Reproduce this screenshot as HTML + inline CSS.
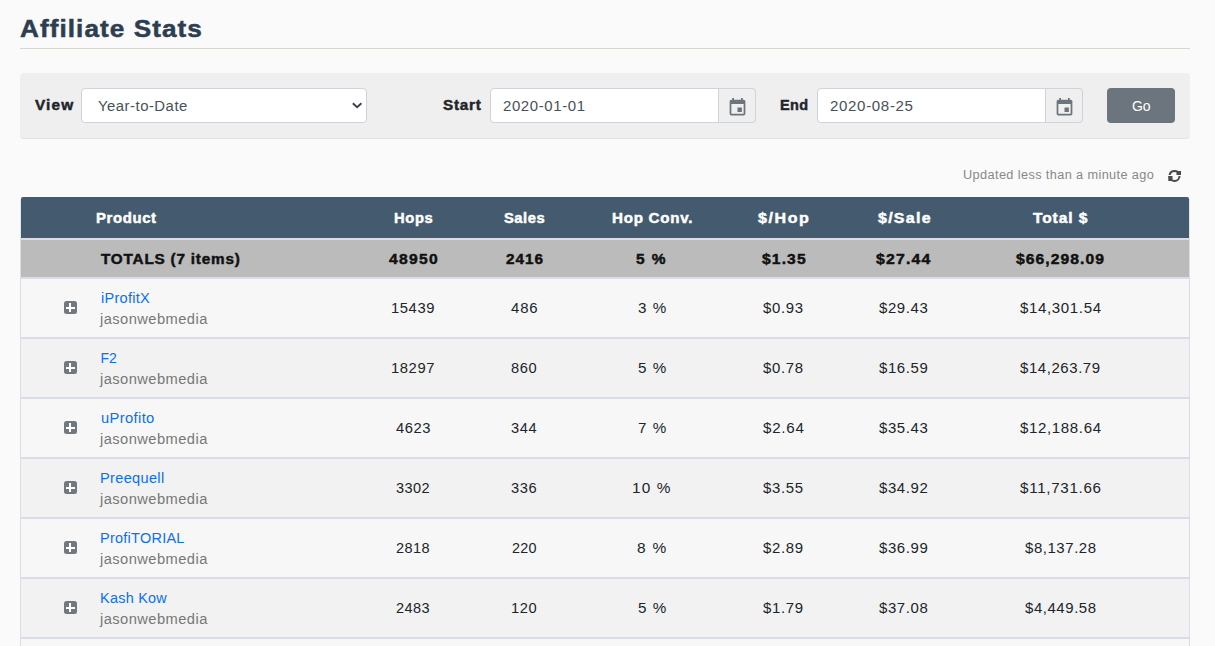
<!DOCTYPE html>
<html><head><meta charset="utf-8">
<style>
html,body{margin:0;padding:0;}
body{width:1215px;height:646px;overflow:hidden;background:#fafafa;position:relative;font-family:"Liberation Sans",sans-serif;}
.t{position:absolute;white-space:nowrap;line-height:1;transform-origin:0 0;}
.b{position:absolute;box-sizing:border-box;}
</style></head><body>
<div class="b" style="left:20px;top:48px;width:1170px;height:1px;background:#d9d6d0"></div>
<div class="b" style="left:20px;top:73px;width:1170px;height:66px;background:#efefef;border-radius:4px;border-bottom:1px solid #e1e3e6"></div>
<div class="b" style="left:81px;top:88px;width:286px;height:35px;background:#fff;border:1px solid #ced4da;border-radius:4px"></div>
<svg class="b" style="left:351px;top:100px" width="12" height="9" viewBox="0 0 12 9"><path d="M1.8 3.2 L6.1 7.1 L10.4 3.2" fill="none" stroke="#3a4047" stroke-width="1.9"/></svg>
<div class="b" style="left:490px;top:88px;width:266px;height:35px;background:#fff;border:1px solid #ced4da;border-radius:4px"></div>
<div class="b" style="left:718px;top:88px;width:38px;height:35px;background:#efefef;border:1px solid #ced4da;border-radius:0 4px 4px 0"></div>
<div class="b" style="left:817px;top:88px;width:266px;height:35px;background:#fff;border:1px solid #ced4da;border-radius:4px"></div>
<div class="b" style="left:1045px;top:88px;width:38px;height:35px;background:#efefef;border:1px solid #ced4da;border-radius:0 4px 4px 0"></div>
<svg class="b" style="left:727px;top:97px" width="21" height="21" viewBox="0 0 24 24"><path fill="#6c757d" d="M17 12h-5v5h5v-5zM16 1v2H8V1H6v2H5c-1.11 0-1.99.9-1.99 2L3 19c0 1.1.89 2 2 2h14c1.1 0 2-.9 2-2V5c0-1.1-.9-2-2-2h-1V1h-2zm3 18H5V8h14v11z"/></svg>
<svg class="b" style="left:1054px;top:97px" width="21" height="21" viewBox="0 0 24 24"><path fill="#6c757d" d="M17 12h-5v5h5v-5zM16 1v2H8V1H6v2H5c-1.11 0-1.99.9-1.99 2L3 19c0 1.1.89 2 2 2h14c1.1 0 2-.9 2-2V5c0-1.1-.9-2-2-2h-1V1h-2zm3 18H5V8h14v11z"/></svg>
<div class="b" style="left:1107px;top:88px;width:68px;height:35px;background:#6c757d;border-radius:4px"></div>
<svg class="b" style="left:1160px;top:164px" width="30" height="24" viewBox="0 0 30 24"><g fill="#4a4a4a"><path d="M8.58 11A6 6 0 0 1 20.42 11L18.37 11A4 4 0 0 0 10.63 11Z"/><rect x="16.5" y="7" width="4.5" height="4"/><path d="M8.5 12A6 6 0 0 0 20.5 12L18.5 12A4 4 0 0 1 10.5 12Z"/><rect x="8.3" y="12" width="4.2" height="5"/></g></svg>
<!-- table -->
<div class="b" style="left:20px;top:199px;width:1px;height:40px;background:#e3e6ec"></div><div class="b" style="left:1189px;top:199px;width:1px;height:40px;background:#e3e6ec"></div>
<div class="b" style="left:20px;top:238px;width:1170px;height:408px;background:#d9dde7"></div>
<div class="b" style="left:21px;top:197px;width:1168px;height:41px;background:#445a6e;border-radius:2px 2px 0 0"></div>
<div class="b" style="left:21px;top:240px;width:1168px;height:37px;background:#bbbbbb"></div>
<div class="b" style="left:21px;top:279px;width:1168px;height:58px;background:#f7f7f7"></div>
<div class="b" style="left:64px;top:301px;width:13px;height:13px;background:#72787f;border-radius:2.5px"></div><div class="b" style="left:66px;top:307px;width:9px;height:2px;background:#fff"></div><div class="b" style="left:69px;top:303px;width:2.4px;height:9px;background:#fff"></div>
<div class="b" style="left:21px;top:339px;width:1168px;height:58px;background:#f2f2f2"></div>
<div class="b" style="left:64px;top:361px;width:13px;height:13px;background:#72787f;border-radius:2.5px"></div><div class="b" style="left:66px;top:367px;width:9px;height:2px;background:#fff"></div><div class="b" style="left:69px;top:363px;width:2.4px;height:9px;background:#fff"></div>
<div class="b" style="left:21px;top:399px;width:1168px;height:58px;background:#f7f7f7"></div>
<div class="b" style="left:64px;top:421px;width:13px;height:13px;background:#72787f;border-radius:2.5px"></div><div class="b" style="left:66px;top:427px;width:9px;height:2px;background:#fff"></div><div class="b" style="left:69px;top:423px;width:2.4px;height:9px;background:#fff"></div>
<div class="b" style="left:21px;top:459px;width:1168px;height:58px;background:#f2f2f2"></div>
<div class="b" style="left:64px;top:481px;width:13px;height:13px;background:#72787f;border-radius:2.5px"></div><div class="b" style="left:66px;top:487px;width:9px;height:2px;background:#fff"></div><div class="b" style="left:69px;top:483px;width:2.4px;height:9px;background:#fff"></div>
<div class="b" style="left:21px;top:519px;width:1168px;height:58px;background:#f7f7f7"></div>
<div class="b" style="left:64px;top:541px;width:13px;height:13px;background:#72787f;border-radius:2.5px"></div><div class="b" style="left:66px;top:547px;width:9px;height:2px;background:#fff"></div><div class="b" style="left:69px;top:543px;width:2.4px;height:9px;background:#fff"></div>
<div class="b" style="left:21px;top:579px;width:1168px;height:58px;background:#f2f2f2"></div>
<div class="b" style="left:64px;top:601px;width:13px;height:13px;background:#72787f;border-radius:2.5px"></div><div class="b" style="left:66px;top:607px;width:9px;height:2px;background:#fff"></div><div class="b" style="left:69px;top:603px;width:2.4px;height:9px;background:#fff"></div>
<div class="b" style="left:21px;top:639px;width:1168px;height:58px;background:#f7f7f7"></div>
<div class="t" style="left:20.0px;top:17px;font-size:24px;color:#2c3e50;transform:scaleX(1.089);font-weight:700;-webkit-text-stroke:0.5px #2c3e50;letter-spacing:0.97px">Affiliate Stats</div>
<div class="t" style="left:34.6px;top:98px;font-size:14px;color:#212529;transform:scaleX(1.097);font-weight:700;-webkit-text-stroke:0.45px #212529;letter-spacing:1.02px">View</div>
<div class="t" style="left:98.4px;top:99px;font-size:14px;color:#495057;transform:scaleX(1.064);letter-spacing:0.46px">Year-to-Date</div>
<div class="t" style="left:443.2px;top:98px;font-size:14px;color:#212529;transform:scaleX(1.089);font-weight:700;-webkit-text-stroke:0.45px #212529;letter-spacing:0.71px">Start</div>
<div class="t" style="left:503.0px;top:99px;font-size:14px;color:#495057;transform:scaleX(1.070);letter-spacing:0.56px">2020-01-01</div>
<div class="t" style="left:780.2px;top:98px;font-size:14px;color:#212529;transform:scaleX(1.033);font-weight:700;-webkit-text-stroke:0.45px #212529;letter-spacing:0.42px">End</div>
<div class="t" style="left:830.1px;top:99px;font-size:14px;color:#495057;transform:scaleX(1.076);letter-spacing:0.61px">2020-08-25</div>
<div class="t" style="left:1131.9px;top:99px;font-size:14px;color:#ffffff">Go</div>
<div class="t" style="left:962.7px;top:169px;font-size:12px;color:#888888;transform:scaleX(1.061);letter-spacing:0.36px">Updated less than a minute ago</div>
<div class="t" style="left:96.2px;top:211px;font-size:14px;color:#ffffff;transform:scaleX(1.065);font-weight:700;-webkit-text-stroke:0.45px #ffffff;letter-spacing:0.58px">Product</div>
<div class="t" style="left:393.7px;top:211px;font-size:14px;color:#ffffff;transform:scaleX(1.052);font-weight:700;-webkit-text-stroke:0.45px #ffffff;letter-spacing:0.61px">Hops</div>
<div class="t" style="left:503.8px;top:211px;font-size:14px;color:#ffffff;transform:scaleX(1.053);font-weight:700;-webkit-text-stroke:0.45px #ffffff;letter-spacing:0.49px">Sales</div>
<div class="t" style="left:611.8px;top:211px;font-size:14px;color:#ffffff;transform:scaleX(1.081);font-weight:700;-webkit-text-stroke:0.45px #ffffff;letter-spacing:0.69px">Hop Conv.</div>
<div class="t" style="left:758.1px;top:211px;font-size:14px;color:#ffffff;transform:scaleX(1.145);font-weight:700;-webkit-text-stroke:0.45px #ffffff;letter-spacing:1.39px">$/Hop</div>
<div class="t" style="left:877.5px;top:211px;font-size:14px;color:#ffffff;transform:scaleX(1.139);font-weight:700;-webkit-text-stroke:0.45px #ffffff;letter-spacing:1.13px">$/Sale</div>
<div class="t" style="left:1032.8px;top:211px;font-size:14px;color:#ffffff;transform:scaleX(1.109);font-weight:700;-webkit-text-stroke:0.45px #ffffff;letter-spacing:0.81px">Total $</div>
<div class="t" style="left:100.8px;top:252px;font-size:14px;color:#111111;transform:scaleX(1.093);font-weight:700;-webkit-text-stroke:0.45px #111111;letter-spacing:0.72px">TOTALS (7 items)</div>
<div class="t" style="left:388.7px;top:252px;font-size:14px;color:#111111;transform:scaleX(1.118);font-weight:700;-webkit-text-stroke:0.45px #111111;letter-spacing:1.16px">48950</div>
<div class="t" style="left:505.6px;top:252px;font-size:14px;color:#111111;transform:scaleX(1.090);font-weight:700;-webkit-text-stroke:0.45px #111111;letter-spacing:0.94px">2416</div>
<div class="t" style="left:636.4px;top:252px;font-size:14px;color:#111111;transform:scaleX(1.105);font-weight:700;-webkit-text-stroke:0.45px #111111;letter-spacing:1.29px">5 %</div>
<div class="t" style="left:761.6px;top:252px;font-size:14px;color:#111111;transform:scaleX(1.115);font-weight:700;-webkit-text-stroke:0.45px #111111;letter-spacing:1.02px">$1.35</div>
<div class="t" style="left:876.2px;top:252px;font-size:14px;color:#111111;transform:scaleX(1.126);font-weight:700;-webkit-text-stroke:0.45px #111111;letter-spacing:1.09px">$27.44</div>
<div class="t" style="left:1016.3px;top:252px;font-size:14px;color:#111111;transform:scaleX(1.120);font-weight:700;-webkit-text-stroke:0.45px #111111;letter-spacing:0.94px">$66,298.09</div>
<div class="t" style="left:101.4px;top:291px;font-size:14px;color:#0a6ef8;transform:scaleX(1.039);letter-spacing:0.25px">iProfitX</div>
<div class="t" style="left:100.2px;top:312px;font-size:14px;color:#777777;transform:scaleX(1.050);letter-spacing:0.41px">jasonwebmedia</div>
<div class="t" style="left:390.8px;top:301px;font-size:14px;color:#212529;transform:scaleX(1.057);letter-spacing:0.54px">15439</div>
<div class="t" style="left:510.8px;top:301px;font-size:14px;color:#212529;transform:scaleX(1.067);letter-spacing:0.78px">486</div>
<div class="t" style="left:637.6px;top:301px;font-size:14px;color:#212529;transform:scaleX(1.085);letter-spacing:1.00px">3 %</div>
<div class="t" style="left:763.4px;top:301px;font-size:14px;color:#212529;transform:scaleX(1.068);letter-spacing:0.60px">$0.93</div>
<div class="t" style="left:879.0px;top:301px;font-size:14px;color:#212529;transform:scaleX(1.068);letter-spacing:0.58px">$29.43</div>
<div class="t" style="left:1019.8px;top:301px;font-size:14px;color:#212529;transform:scaleX(1.075);letter-spacing:0.59px">$14,301.54</div>
<div class="t" style="left:100.4px;top:351px;font-size:14px;color:#0a6ef8;letter-spacing:-0.03px">F2</div>
<div class="t" style="left:100.2px;top:372px;font-size:14px;color:#777777;transform:scaleX(1.050);letter-spacing:0.41px">jasonwebmedia</div>
<div class="t" style="left:390.8px;top:361px;font-size:14px;color:#212529;transform:scaleX(1.057);letter-spacing:0.54px">18297</div>
<div class="t" style="left:511.3px;top:361px;font-size:14px;color:#212529;transform:scaleX(1.046);letter-spacing:0.55px">860</div>
<div class="t" style="left:637.6px;top:361px;font-size:14px;color:#212529;transform:scaleX(1.085);letter-spacing:1.00px">5 %</div>
<div class="t" style="left:763.4px;top:361px;font-size:14px;color:#212529;transform:scaleX(1.068);letter-spacing:0.60px">$0.78</div>
<div class="t" style="left:879.0px;top:361px;font-size:14px;color:#212529;transform:scaleX(1.068);letter-spacing:0.58px">$16.59</div>
<div class="t" style="left:1020.3px;top:361px;font-size:14px;color:#212529;transform:scaleX(1.069);letter-spacing:0.54px">$14,263.79</div>
<div class="t" style="left:101.4px;top:411px;font-size:14px;color:#0a6ef8;transform:scaleX(1.051);letter-spacing:0.35px">uProfito</div>
<div class="t" style="left:100.2px;top:432px;font-size:14px;color:#777777;transform:scaleX(1.050);letter-spacing:0.41px">jasonwebmedia</div>
<div class="t" style="left:395.8px;top:421px;font-size:14px;color:#212529;transform:scaleX(1.052);letter-spacing:0.55px">4623</div>
<div class="t" style="left:511.3px;top:421px;font-size:14px;color:#212529;transform:scaleX(1.046);letter-spacing:0.55px">344</div>
<div class="t" style="left:637.6px;top:421px;font-size:14px;color:#212529;transform:scaleX(1.085);letter-spacing:1.00px">7 %</div>
<div class="t" style="left:762.9px;top:421px;font-size:14px;color:#212529;transform:scaleX(1.081);letter-spacing:0.71px">$2.64</div>
<div class="t" style="left:879.0px;top:421px;font-size:14px;color:#212529;transform:scaleX(1.068);letter-spacing:0.58px">$35.43</div>
<div class="t" style="left:1019.8px;top:421px;font-size:14px;color:#212529;transform:scaleX(1.075);letter-spacing:0.59px">$12,188.64</div>
<div class="t" style="left:100.4px;top:471px;font-size:14px;color:#0a6ef8;transform:scaleX(1.042);letter-spacing:0.30px">Preequell</div>
<div class="t" style="left:100.2px;top:492px;font-size:14px;color:#777777;transform:scaleX(1.050);letter-spacing:0.41px">jasonwebmedia</div>
<div class="t" style="left:396.3px;top:481px;font-size:14px;color:#212529;transform:scaleX(1.037);letter-spacing:0.39px">3302</div>
<div class="t" style="left:511.3px;top:481px;font-size:14px;color:#212529;transform:scaleX(1.046);letter-spacing:0.55px">336</div>
<div class="t" style="left:632.0px;top:481px;font-size:14px;color:#212529;transform:scaleX(1.099);letter-spacing:1.00px">10 %</div>
<div class="t" style="left:763.4px;top:481px;font-size:14px;color:#212529;transform:scaleX(1.068);letter-spacing:0.60px">$3.55</div>
<div class="t" style="left:879.0px;top:481px;font-size:14px;color:#212529;transform:scaleX(1.068);letter-spacing:0.58px">$34.92</div>
<div class="t" style="left:1019.8px;top:481px;font-size:14px;color:#212529;transform:scaleX(1.083);letter-spacing:0.64px">$11,731.66</div>
<div class="t" style="left:100.4px;top:531px;font-size:14px;color:#0a6ef8;transform:scaleX(1.033);letter-spacing:0.26px">ProfiTORIAL</div>
<div class="t" style="left:100.2px;top:552px;font-size:14px;color:#777777;transform:scaleX(1.050);letter-spacing:0.41px">jasonwebmedia</div>
<div class="t" style="left:396.3px;top:541px;font-size:14px;color:#212529;transform:scaleX(1.037);letter-spacing:0.39px">2818</div>
<div class="t" style="left:511.8px;top:541px;font-size:14px;color:#212529;transform:scaleX(1.026);letter-spacing:0.31px">220</div>
<div class="t" style="left:637.1px;top:541px;font-size:14px;color:#212529;transform:scaleX(1.104);letter-spacing:1.23px">8 %</div>
<div class="t" style="left:763.4px;top:541px;font-size:14px;color:#212529;transform:scaleX(1.068);letter-spacing:0.60px">$2.89</div>
<div class="t" style="left:879.0px;top:541px;font-size:14px;color:#212529;transform:scaleX(1.068);letter-spacing:0.58px">$36.99</div>
<div class="t" style="left:1024.7px;top:541px;font-size:14px;color:#212529;transform:scaleX(1.068);letter-spacing:0.53px">$8,137.28</div>
<div class="t" style="left:100.4px;top:591px;font-size:14px;color:#0a6ef8;transform:scaleX(1.029);letter-spacing:0.26px">Kash Kow</div>
<div class="t" style="left:100.2px;top:612px;font-size:14px;color:#777777;transform:scaleX(1.050);letter-spacing:0.41px">jasonwebmedia</div>
<div class="t" style="left:396.3px;top:601px;font-size:14px;color:#212529;transform:scaleX(1.037);letter-spacing:0.39px">2483</div>
<div class="t" style="left:510.7px;top:601px;font-size:14px;color:#212529;transform:scaleX(1.048);letter-spacing:0.55px">120</div>
<div class="t" style="left:637.6px;top:601px;font-size:14px;color:#212529;transform:scaleX(1.085);letter-spacing:1.00px">5 %</div>
<div class="t" style="left:763.4px;top:601px;font-size:14px;color:#212529;transform:scaleX(1.068);letter-spacing:0.60px">$1.79</div>
<div class="t" style="left:879.0px;top:601px;font-size:14px;color:#212529;transform:scaleX(1.068);letter-spacing:0.58px">$37.08</div>
<div class="t" style="left:1024.7px;top:601px;font-size:14px;color:#212529;transform:scaleX(1.068);letter-spacing:0.53px">$4,449.58</div>
</body></html>
